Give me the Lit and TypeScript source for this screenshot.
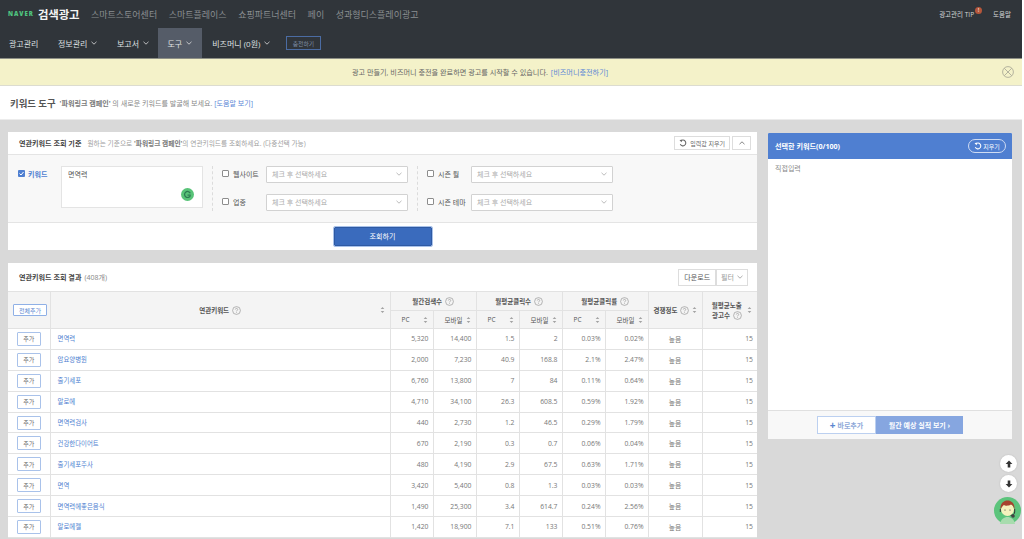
import { html, css, LitElement, svg } from 'lit';
import { customElement } from 'lit/decorators.js';

const ROWS = [
  ['면역력', '5,320', '14,400', '1.5', '2', '0.03%', '0.02%'],
  ['암요양병원', '2,000', '7,230', '40.9', '168.8', '2.1%', '2.47%'],
  ['줄기세포', '6,760', '13,800', '7', '84', '0.11%', '0.64%'],
  ['알로에', '4,710', '34,100', '26.3', '608.5', '0.59%', '1.92%'],
  ['면역력검사', '440', '2,730', '1.2', '46.5', '0.29%', '1.79%'],
  ['건강한다이어트', '670', '2,190', '0.3', '0.7', '0.06%', '0.04%'],
  ['줄기세포주사', '480', '4,190', '2.9', '67.5', '0.63%', '1.71%'],
  ['면역', '3,420', '5,400', '0.8', '1.3', '0.03%', '0.03%'],
  ['면역력에좋은음식', '1,490', '25,300', '3.4', '614.7', '0.24%', '2.56%'],
  ['알로에젤', '1,420', '18,900', '7.1', '133', '0.51%', '0.76%'],
];

const chevron = (up = false) => svg`<svg class="chev" width="6" height="4" viewBox="0 0 6 4"><path d=${up ? 'M.5 3.2 3 .8l2.5 2.4' : 'M.5.8 3 3.2 5.5.8'} fill="none" stroke="currentColor" stroke-width=".8"/></svg>`;

const refresh = () => svg`<svg width="8" height="8" viewBox="0 0 10 10"><path d="M2.2 2.6A3.6 3.6 0 1 1 1.6 6.4" fill="none" stroke="currentColor" stroke-width="1.3"/><path d="M.6 1.2 3.8.9 3.2 4z" fill="currentColor"/></svg>`;

const help = () => svg`<svg class="help" width="9" height="9" viewBox="0 0 9 9"><circle cx="4.5" cy="4.5" r="3.9" fill="none" stroke="#8a8a8a" stroke-width=".6"/><path d="M3.3 3.5c0-1.5 2.4-1.5 2.4 0 0 .9-1.2.9-1.2 1.9M4.5 6.1v.7" fill="none" stroke="#8a8a8a" stroke-width=".6"/></svg>`;

const sort = () => svg`<svg class="sort" width="5" height="7" viewBox="0 0 5 7"><path d="M2.5.5 4.3 2.6H.7zM2.5 6.5 4.3 4.4H.7z" fill="#a3a3a3"/></svg>`;

@customElement('app-root')
export class AppRoot extends LitElement {
  static styles = css`
    :host {
      display: block;
      position: relative;
      width: 1024px;
      height: 539px;
      overflow: hidden;
      background: #d9d9d9;
      font-family: 'Open Sans', 'Noto Sans CJK KR', sans-serif;
      font-size: 7px;
      color: #555;
    }
    a { color: #5a86d6; text-decoration: none; }
    button { font-family: inherit; margin: 0; padding: 0; cursor: pointer; }

    .top { background: #30353a; height: 59px; border-bottom: 1px solid #8d8f86; box-sizing: border-box; }
    .top-row { height: 28px; display: flex; align-items: center; padding-left: 8px; color: #8a8e91; font-size: 9px; }
    .logo { color: #4fc47f; font: 800 6px 'Open Sans', sans-serif; letter-spacing: 1px; margin-right: 4px; }
    .brand { color: #f4f4f4; font-size: 11.4px; font-weight: 700; margin-right: 11.500px; letter-spacing: -.1px; }
    .top-link { margin-right: 11.5px; }
    .top-right { margin-left: auto; display: flex; align-items: center; color: #d4d5d6; font-size: 6.5px; padding-right: 13px; }
    .tip { position: relative; margin-right: 19px; }
    .badge { position: absolute; left: 100%; top: -2px; margin-left: 1px; width: 7px; height: 7px; border-radius: 50%; background: #b5563a; color: #fff; font-size: 6px; line-height: 7px; text-align: center; }
    .nav-row { height: 30px; display: flex; align-items: stretch; padding-left: 9px; color: #dfe0e1; font-size: 8px; }
    .nav-item { display: flex; align-items: center; gap: 4px; margin-right: 19.500px; }
    .nav-item.active { background: #555c68; margin: 0 10px 0 -11px; padding: 0 10px; }
    .chev { flex: none; }
    .charge { align-self: center; width: 35px; height: 14px; margin-left: -4px; background: none; border: 1px solid #4b6ca3; color: #7f8ea6; font-size: 5.8px; }

    .banner { height: 27px; background: #f4f2c9; border-bottom: 1px solid #dcdcd0; box-sizing: border-box; display: flex; align-items: center; justify-content: center; position: relative; font-size: 7.15px; color: #666; padding-right: 64px; }
    .banner a { margin-left: 3px; }
    .close { position: absolute; right: 10px; top: 7px; }

    .title { height: 33px; background: #fff; border-bottom: 1px solid #ececec; display: flex; align-items: center; padding-left: 10px; gap: 4px; color: #888; font-size: 7.05px; }
    .title b { font-size: 9.4px; color: #555; font-weight: 700; }
    .title strong { color: #777; }

    .main { display: flex; align-items: flex-start; gap: 11px; padding: 12px 10px 0 8px; }
    .left { width: 749px; flex: none; display: flex; flex-direction: column; gap: 13px; }

    .panel { background: #fff; }
    .panel-head { height: 22px; display: flex; align-items: center; padding: 0 6px 0 11px; gap: 6px; color: #a0a0a0; font-size: 6.7px; border-bottom: 1px solid #e4e4e4; }
    .panel-head b { color: #444; font-size: 7.1px; font-weight: 700; }
    .panel-head strong { color: #777; }
    .head-actions { margin-left: auto; display: flex; gap: 2px; }
    .ghost { height: 12px; border: 1px solid #ddd; background: #fff; color: #666; font-size: 6px; display: flex; align-items: center; gap: 3px; padding: 0 4px; box-sizing: content-box; }
    .ghost.small { padding: 0 5.500px; }

    .filters { height: 68px; background: #f8f8f8; border-bottom: 1px solid #e4e4e4; display: flex; padding: 11px 0 0 10px; box-sizing: border-box; }
    .kw { display: flex; width: 185px; }
    .check { display: block; width: 5px; height: 5px; border: 1px solid #8d8d8d; border-radius: 1px; background: #fff; flex: none; box-sizing: content-box; }
    .check-on { flex: none; display: block; }
    .kw-label { color: #4f7fd1; font-weight: 700; display: flex; gap: 3px; align-items: center; height: 9px; margin-top: 3px; font-size: 7px; width: 43px; white-space: nowrap; }
    .kw-box { position: relative; width: 142px; height: 42px; background: #fff; border: 1px solid #e4e4e4; box-sizing: border-box; padding: 2px 6px; color: #555; }
    .sync { position: absolute; right: 8px; bottom: 6px; }
    .group { border-left: 1px dashed #dcdcdc; height: 45px; padding-left: 9px; display: flex; flex-direction: column; gap: 11px; margin-left: 9px; }
    .field { display: flex; align-items: center; height: 17px; }
    .field label { display: flex; align-items: center; gap: 4px; color: #555; width: 44px; white-space: nowrap; padding-bottom: 2px; }
    .select { width: 142px; height: 17px; border: 1px solid #d2d2d2; background: #fff; box-sizing: border-box; border-radius: 1px; color: #aaa; display: flex; align-items: center; justify-content: space-between; padding: 0 5px 1px; }
    .select .chev { color: #aaa; }
    .search { height: 27px; display: flex; justify-content: center; align-items: center; }
    .search button { width: 98px; height: 19px; background: #3a6bbd; color: #fff; border: 1px solid #2f5aa3; border-radius: 1px; font-size: 7px; padding-bottom: 1px; outline: 1px solid #a9c2ea; }

    .result-head { height: 28px; display: flex; align-items: center; padding: 0 9px 0 11px; color: #888; gap: 3px; }
    .result-head b { color: #444; font-size: 7.1px; font-weight: 700; }
    .result-head .ghost { height: 15px; color: #555; font-size: 7px; padding: 0 5px; }
    .result-head .filter { color: #999; padding: 0 4px; }
    .result-head .head-actions { gap: 0; }

    table { width: 749px; border-collapse: collapse; table-layout: fixed; background: #fff; }
    th, td { border: 1px solid #e2e2e2; padding: 0; box-sizing: border-box; }
    tr > :first-child { border-left: 0; }
    tr > :last-child { border-right: 0; }
    th { background: #f4f4f4; color: #555; font-weight: 700; font-size: 6.5px; position: relative; }
    th.comp { text-align: left; padding-left: 5px; }
    th.ad { padding-right: 6px; }
    thead tr { height: 19px; }
    thead tr.second { height: 18px; }
    tbody tr { height: 20.9px; }
    td { text-align: right; padding-right: 4px; color: #777; font-size: 6.8px; }
    td.center { text-align: center; padding: 0; }
    td.name { text-align: left; padding-left: 7px; color: #4f7fd1; font-size: 6.4px; }
    .c-add { width: 42px; } .c-name { width: 340px; } .c-num { width: 43px; } .c-comp { width: 54px; }
    .sort { position: absolute; right: 5px; top: 50%; transform: translateY(-50%); }
    .help { vertical-align: -2px; margin-left: 1px; }
    th.sub { font-weight: 400; text-align: left; padding-left: 11px; }
    .add { width: 22px; height: 12px; background: #fff; border: 1px solid #a9c2ea; border-radius: 1px; color: #666; font-size: 6px; display: block; margin: 0 auto; box-sizing: content-box; }
    .add.all { width: 32px; color: #5b86cf; border-color: #8fb0e6; height: 10px; margin-left: 5px; }

    .right { width: 244px; flex: none; height: 306px; background: #fff; display: flex; flex-direction: column; margin-top: 1px; }
    .right-head { height: 26px; background: #4f7fd1; color: #fff; display: flex; align-items: center; justify-content: space-between; padding: 0 6px 0 7px; font-size: 7.1px; font-weight: 700; border-radius: 1px 1px 0 0; }
    .pill { width: 38px; height: 14px; border: 1px solid #cfdcf3; border-radius: 8px; background: none; color: #fff; font-size: 6px; display: flex; align-items: center; justify-content: center; gap: 1px; }
    .direct { flex: 1; padding: 4px 7px; color: #888; font-size: 7px; }
    .right-foot { height: 28px; background: #f8f8f8; border-top: 1px solid #e0e0e0; display: flex; align-items: center; justify-content: center; }
    .right-foot button { height: 18px; font-size: 7px; display: flex; align-items: center; justify-content: center; gap: 2px; }
    .quick { width: 59px; background: #fff; border: 1px solid #bcd0f0; color: #8fa9d8; font-weight: 700; }
    .quick i { color: #5b86cf; font-style: normal; font-size: 10px; line-height: 10px; font-weight: 700; }
    .forecast { width: 87px; background: #86a6e0; border: 0; color: #fff; font-weight: 700; }

    .fab { position: absolute; width: 17px; height: 17px; border-radius: 50%; background: #fff; box-shadow: 0 0 2px rgba(0, 0, 0, .15); display: flex; align-items: center; justify-content: center; right: 7px; }
    .fab.up { top: 455px; }
    .fab.down { top: 475px; }
    .avatar { position: absolute; right: 3px; top: 497px; }
    .edge { position: absolute; top: 0; bottom: 0; right: 0; width: 2px; background: #fff; }
  `;

  render() {
    return html`
      <div class="top">
        <div class="top-row">
          <span class="logo">NAVER</span>
          <span class="brand">검색광고</span>
          ${['스마트스토어센터', '스마트플레이스', '쇼핑파트너센터', '페이', '성과형디스플레이광고'].map(
            (t) => html`<span class="top-link">${t}</span>`
          )}
          <div class="top-right">
            <span class="tip">광고관리 TIP<span class="badge">!</span></span>
            <span>도움말</span>
          </div>
        </div>
        <div class="nav-row">
          <span class="nav-item">광고관리</span>
          <span class="nav-item">정보관리 ${chevron()}</span>
          <span class="nav-item">보고서 ${chevron()}</span>
          <span class="nav-item active">도구 ${chevron()}</span>
          <span class="nav-item">비즈머니 (0원) ${chevron()}</span>
          <button class="charge">충전하기</button>
        </div>
      </div>
      <div class="banner">
        광고 만들기, 비즈머니 충전을 완료하면 광고를 시작할 수 있습니다. <a href="#">[비즈머니충전하기]</a>
        <svg class="close" width="12" height="12" viewBox="0 0 12 12"><circle cx="6" cy="6" r="5.4" fill="none" stroke="#9a9a8c" stroke-width=".7"/><path d="M2.4 2.4l7.2 7.2M9.6 2.4l-7.2 7.2" stroke="#9a9a8c" stroke-width=".7"/></svg>
      </div>
      <div class="title">
        <b>키워드 도구</b>
        <span><strong>'파워링크 캠페인'</strong> 의 새로운 키워드를 발굴해 보세요. <a href="#">[도움말 보기]</a></span>
      </div>
      <div class="main">
        <div class="left">
          ${this.renderCriteria()}
          ${this.renderResults()}
        </div>
        <aside class="right">
          <div class="right-head">선택한 키워드(0/100) <button class="pill">${refresh()}지우기</button></div>
          <div class="direct">직접입력</div>
          <div class="right-foot">
            <button class="quick"><i>+</i>바로추가</button>
            <button class="forecast">월간 예상 실적 보기 ›</button>
          </div>
        </aside>
      </div>
      <div class="fab up"><svg width="8" height="8" viewBox="0 0 8 8"><path d="M4 .6 7.4 4H5.3v3.4H2.7V4H.6z" fill="#333"/></svg></div>
      <div class="fab down"><svg width="8" height="8" viewBox="0 0 8 8"><path d="M4 7.4 7.4 4H5.3V.6H2.7V4H.6z" fill="#333"/></svg></div>
      <svg class="avatar" width="27" height="27" viewBox="0 0 27 27">
        <circle cx="13.5" cy="13.5" r="13.5" fill="#5cc47c"/>
        <path d="M6 27c1-5 4-7 7.5-7s6.500 2 7.500 7z" fill="#a8dcae"/>
        <circle cx="13.500" cy="12.500" r="6.500" fill="#f6f2bd"/>
        <path d="M6.500 12.500C6 6 10 3.500 13.500 3.500s7.500 2.500 7 9c-1-3-2-4.500-3.500-5-2 1.500-6 1.500-7 .5-1.500 1-2.500 2.500-3.500 4.500z" fill="#a8432f"/>
        <path d="M6.300 12v3M20.700 12v3M20.700 15c0 2-2 3.500-4 3.500" fill="none" stroke="#333" stroke-width="1"/>
        <circle cx="11" cy="13" r=".6" fill="#333"/><circle cx="16" cy="13" r=".6" fill="#333"/>
        <circle cx="19" cy="19" r="1.800" fill="#444"/>
      </svg>
      <div class="edge"></div>
    `;
  }

  private renderCriteria() {
    const field = (label: string) => html`
      <div class="field">
        <label><span class="check"></span>${label}</label>
        <div class="select">체크 후 선택하세요 ${chevron()}</div>
      </div>
    `;
    return html`
      <section class="panel">
        <div class="panel-head">
          <b>연관키워드 조회 기준</b>
          <span>원하는 기준으로 <strong>'파워링크 캠페인'</strong>의 연관키워드를 조회하세요. (다중선택 가능)</span>
          <div class="head-actions">
            <button class="ghost">${refresh()} 입력값 지우기</button>
            <button class="ghost small">${chevron(true)}</button>
          </div>
        </div>
        <div class="filters">
          <div class="kw">
            <div class="kw-label">
              <svg class="check-on" width="7" height="7" viewBox="0 0 7 7"><rect width="7" height="7" rx="1" fill="#4f7fd1"/><path d="M1.500 3.500 3 5l2.500-3" fill="none" stroke="#fff" stroke-width="1"/></svg>
              키워드
            </div>
            <div class="kw-box">
              면역력
              <svg class="sync" width="13" height="13" viewBox="0 0 13 13"><circle cx="6.500" cy="6.500" r="6.500" fill="#58c378"/><path d="M9.300 5.200A3 3 0 1 0 9.400 7.500" fill="none" stroke="#2d7a52" stroke-width="1.200"/><path d="M6.500 6.500h3.200v1.200H6.500z" fill="#2d7a52"/></svg>
            </div>
          </div>
          <div class="group">${field('웹사이트')}${field('업종')}</div>
          <div class="group">${field('시즌 월')}${field('시즌 테마')}</div>
        </div>
        <div class="search"><button>조회하기</button></div>
      </section>
    `;
  }

  private renderResults() {
    return html`
      <section class="panel">
        <div class="result-head">
          <b>연관키워드 조회 결과</b> (408개)
          <div class="head-actions">
            <button class="ghost">다운로드</button>
            <button class="ghost filter">필터 ${chevron()}</button>
          </div>
        </div>
        <table>
          <colgroup>
            <col class="c-add" /><col class="c-name" />
            <col class="c-num" /><col class="c-num" /><col class="c-num" /><col class="c-num" /><col class="c-num" /><col class="c-num" />
            <col class="c-comp" /><col />
          </colgroup>
          <thead>
            <tr>
              <th rowspan="2"><button class="add all">전체추가</button></th>
              <th rowspan="2">연관키워드 ${help()}${sort()}</th>
              <th colspan="2">월간검색수 ${help()}</th>
              <th colspan="2">월평균클릭수 ${help()}</th>
              <th colspan="2">월평균클릭률 ${help()}</th>
              <th rowspan="2" class="comp">경쟁정도 ${help()}${sort()}</th>
              <th rowspan="2" class="ad">월평균노출<br />광고수 ${help()}${sort()}</th>
            </tr>
            <tr class="second">
              ${['PC', '모바일', 'PC', '모바일', 'PC', '모바일'].map(
                (t) => html`<th class="sub">${t}${sort()}</th>`
              )}
            </tr>
          </thead>
          <tbody>
            ${ROWS.map(
              ([name, ...nums]) => html`
                <tr>
                  <td class="center"><button class="add">추가</button></td>
                  <td class="name">${name}</td>
                  ${nums.map((n) => html`<td>${n}</td>`)}
                  <td class="center">높음</td>
                  <td>15</td>
                </tr>
              `
            )}
          </tbody>
        </table>
      </section>
    `;
  }
}
